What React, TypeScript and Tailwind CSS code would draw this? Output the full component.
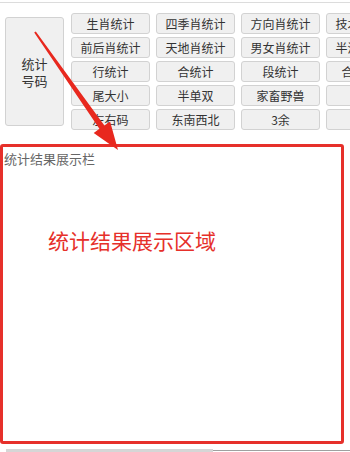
const font = "font-['Noto_Sans_CJK_SC','Noto_Sans',sans-serif]"

const cols = [
  ['生肖统计', '前后肖统计', '行统计', '尾大小', '左右码'],
  ['四季肖统计', '天地肖统计', '合统计', '半单双', '东南西北'],
  ['方向肖统计', '男女肖统计', '段统计', '家畜野兽', '3余'],
  ['技术肖统计', '半波色统计', '合数单双', '', '']
]

const Btn = ({ label }: { label: string }) => (
  <button className="h-[21px] w-[79px] shrink-0 rounded-[3px] border border-[#d2d2d2] bg-[#f0f0f0] text-[12px] leading-none text-[#333] whitespace-nowrap">
    {label}
  </button>
)

const Arrow = () => (
  <svg
    className="pointer-events-none absolute left-0 top-0"
    width="350"
    height="452"
    viewBox="0 0 350 452">
    <polygon
      points="35.8,31.4 104.4,125.4 110.1,121.4 118,150 93.7,132.9 99.4,128.8 34.2,32.6"
      fill="#e8281e"
    />
  </svg>
)

const App = () => {
  return (
    <div
      className={`relative h-[452px] w-[350px] overflow-hidden bg-white ${font}`}>
      <div className="mt-[2px] h-px bg-[#dcdcdc]" />

      <div className="flex items-center gap-[7px] pl-[5px] pt-[10px]">
        <button className="flex h-[109px] w-[59px] shrink-0 flex-col items-center justify-center rounded-[3px] border border-[#d2d2d2] bg-[#f0f0f0] text-[13px] leading-[17px] text-[#333]">
          <span>统计</span>
          <span>号码</span>
        </button>
        <div className="flex gap-[6px]">
          {cols.map((col, i) => (
            <div key={i} className="flex flex-col gap-[3px]">
              {col.map((label, j) => (
                <Btn key={j} label={label} />
              ))}
            </div>
          ))}
        </div>
      </div>

      <div className="mt-[14px] h-[300px] w-[344px] rounded-[3px] border-[3px] border-[#e6302a] pl-px pt-[3px]">
        <div className="text-[13px] leading-[17px] text-[#666]">
          统计结果展示栏
        </div>
        <div className="ml-[44px] mt-[63px] text-[21px] leading-none text-[#e6302a]">
          统计结果展示区域
        </div>
      </div>

      <div className="mt-[5px] flex items-start">
        <div className="ml-[6px] h-[3px] w-[207px] bg-[#d6d6d6]" />
        <div className="mt-px flex-1 border-t border-[#a0a0a0]" />
      </div>

      <Arrow />
    </div>
  )
}

export default App
